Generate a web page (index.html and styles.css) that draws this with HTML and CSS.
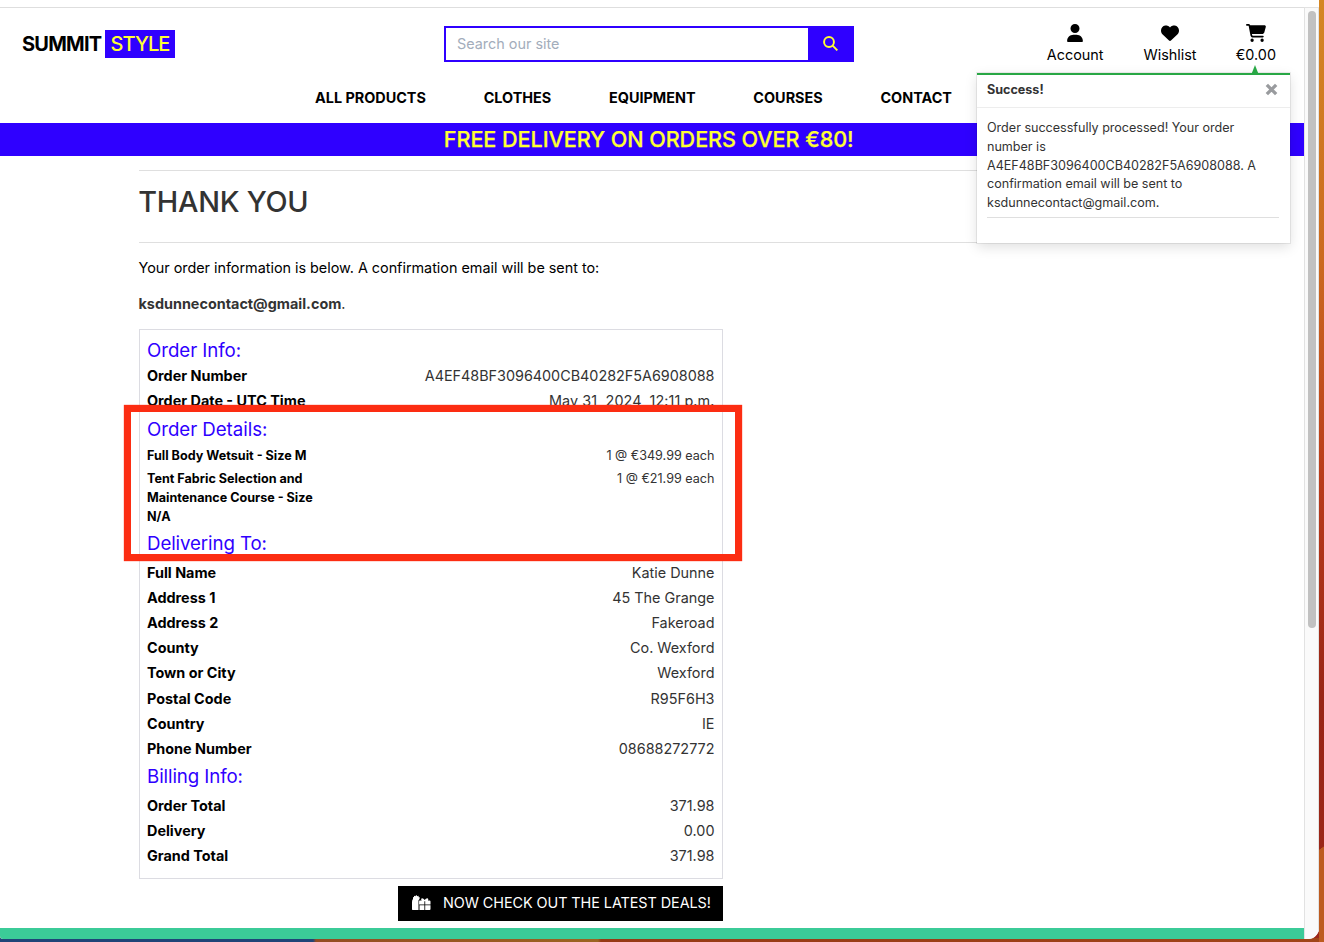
FILE: index.html
```html
<!DOCTYPE html>
<html lang="en">
<head>
<meta charset="utf-8">
<title>Summit Style</title>
<link rel="stylesheet" href="styles.css">
</head>
<body>
<div class="window">
  <div class="page">
    <header class="header">
      <div class="brand"><b>SUMMIT</b><span class="brand-tag">STYLE</span></div>
      <div class="search">
        <div class="search-field">Search our site</div>
        <div class="search-btn"><svg width="15" height="15" viewBox="0 0 14 14"><circle cx="5.6" cy="5.6" r="4.6"/><path d="M9 9 13.400 13.400"/></svg></div>
      </div>
      <div class="tools">
        <a class="tool account"><svg width="16" height="18" viewBox="0 0 448 512"><path d="M224 256A128 128 0 1 0 224 0a128 128 0 1 0 0 256zm-46 48C80 304 0 384 0 482c0 17 13 30 30 30h388c17 0 30-13 30-30 0-98-80-178-178-178z"/></svg><span>Account</span></a>
        <a class="tool wishlist"><svg width="18" height="18" viewBox="0 0 512 512"><path d="M47.600 300.400 228.300 469.100c7.500 7 17.400 10.900 27.700 10.900s20.200-3.900 27.700-10.900L464.400 300.400c30.400-28.300 47.600-68 47.600-109.500v-5.800c0-69.900-50.500-129.500-119.400-141C347 36.500 300.600 51.400 268 84L256 96 244 84c-32.600-32.600-79-47.500-124.600-39.900C50.500 55.600 0 115.200 0 185.100v5.800c0 41.500 17.200 81.200 47.600 109.500z"/></svg><span>Wishlist</span></a>
        <a class="tool cart"><svg width="20" height="18" viewBox="0 0 576 512"><path d="M0 24C0 10.700 10.700 0 24 0h45.500c22 0 41.500 12.800 50.600 32h411c26.300 0 45.500 25 38.600 50.400l-41 152.300c-8.500 31.400-37 53.300-69.500 53.300H170.700l5.400 28.500c2.200 11.300 12.100 19.500 23.600 19.500H488c13.300 0 24 10.700 24 24s-10.700 24-24 24H199.700c-34.600 0-64.300-24.600-70.700-58.500L77.400 54.500c-.7-3.800-4-6.500-7.900-6.500H24C10.700 48 0 37.300 0 24zm128 440a48 48 0 1 1 96 0 48 48 0 1 1-96 0zm288 0a48 48 0 1 1 96 0 48 48 0 1 1-96 0z"/></svg><span>€0.00</span></a>
      </div>
    </header>
    <nav class="nav"><a>ALL PRODUCTS</a><a>CLOTHES</a><a>EQUIPMENT</a><a>COURSES</a><a>CONTACT</a></nav>
    <div class="banner"><span>FREE DELIVERY ON ORDERS OVER €80!</span></div>
    <main class="content">
      <div class="title"><h1>THANK YOU</h1></div>
      <p class="intro"><span>Your order information is below. A confirmation email will be sent to:</span></p>
      <p class="email"><b>ksdunnecontact@gmail.com</b>.</p>
      <section class="order">
        <h2>Order Info:</h2>
        <div class="row"><b>Order Number</b><span class="number">A4EF48BF3096400CB40282F5A6908088</span></div>
        <div class="row"><b>Order Date - UTC Time</b><span class="date">May 31, 2024, 12:11 p.m.</span></div>
        <h2 class="details">Order Details:</h2>
        <div class="row small"><b>Full Body Wetsuit - Size M</b><span>1 @ €349.99 each</span></div>
        <div class="row small"><b>Tent Fabric Selection and<br>Maintenance Course - Size<br>N/A</b><span>1 @ €21.99 each</span></div>
        <h2 class="delivering">Delivering To:</h2>
        <div class="row"><b>Full Name</b><span>Katie Dunne</span></div>
        <div class="row"><b>Address 1</b><span>45 The Grange</span></div>
        <div class="row"><b>Address 2</b><span>Fakeroad</span></div>
        <div class="row"><b>County</b><span>Co. Wexford</span></div>
        <div class="row"><b>Town or City</b><span>Wexford</span></div>
        <div class="row"><b>Postal Code</b><span>R95F6H3</span></div>
        <div class="row"><b>Country</b><span>IE</span></div>
        <div class="row"><b>Phone Number</b><span>08688272772</span></div>
        <h2 class="billing">Billing Info:</h2>
        <div class="row"><b>Order Total</b><span>371.98</span></div>
        <div class="row"><b>Delivery</b><span>0.00</span></div>
        <div class="row"><b>Grand Total</b><span>371.98</span></div>
      </section>
      <a class="deals"><svg width="19" height="16" viewBox="0 0 19 16"><path d="M1 4V2l1 .3V.8l1.300.5L4.300 0l1 1.300L6.600.8v1.500l1-.3v2L6.500 5.200V15H.6Q0 15 0 14.300V7Q0 5 1 4z"/><path d="M7.500 5.500h2.200C8.200 3.500 10 2.500 11.500 3.700l1.200 1.300 1.200-1.300c1.500-1.200 3.300-.2 2 1.800h1.600q1 0 1 1V9.500h-5.300V6.200h-.8v3.300h-5.300V6.500q0-1 .4-1zM7.500 10.200h4.900V15H7.500zM13.200 10.200h5.300v3.900q0 .9-.9.900h-4.400z"/></svg><span>NOW CHECK OUT THE LATEST DEALS!</span></a>
    </main>
    <footer class="footer"></footer>
  </div>
  <div class="scrollbar"><div class="thumb"></div></div>
</div>
<div class="toast">
  <div class="toast-arrow"></div>
  <div class="toast-head"><b>Success!</b><svg width="13" height="13" viewBox="0 0 12 12"><path d="M1.700 1.700 10.300 10.300M10.300 1.700 1.700 10.300"/></svg></div>
  <div class="toast-body"><p>Order successfully processed! Your order<br>number is<br>A4EF48BF3096400CB40282F5A6908088. A<br>confirmation email will be sent to<br>ksdunnecontact@gmail.com.</p></div>
</div>
<div class="highlight"></div>
</body>
</html>
```

FILE: styles.css
```css
* { box-sizing: border-box; }
body {
  margin: 0;
  width: 1324px;
  height: 942px;
  overflow: hidden;
  font: 14.4px/21.6px Inter, sans-serif;
  color: #333;
  background:
    linear-gradient(90deg, #1f4478 0 313px, #944c22 316px, #9b6421 598px, #963914 601px, #a04418) 0 938px / 1319px 4px no-repeat,
    linear-gradient(145deg, transparent 0 49%, #bd5b20 52%) 1319px 838px / 5px 20px no-repeat,
    linear-gradient(#bd5b20, #bd5b20) 1319px 857px / 5px 85px no-repeat,
    linear-gradient(#d48724, #cb6a20 260px, #b93b1b 480px, #982516 700px, #9c2719);
}
h1, h2, p { margin: 0; font-weight: 400; }
svg { display: block; flex: none; }
.window {
  display: flex;
  width: 1319px;
  height: 939px;
  padding-top: 7px;
  background: #fff;
  border-radius: 0 0 11px 3px;
  overflow: hidden;
}
.page { width: 1304px; border-top: 1px solid #dedede; display: flex; flex-direction: column; }
.scrollbar { width: 15px; border: solid #e2e2e2; border-width: 1px 1px 0 1px; background: #fafafa; padding: 3px 0 0 3px; }
.thumb { width: 8px; height: 617px; border-radius: 4px; background: #c1c1c1; }

.header { display: flex; height: 72px; padding: 18px 28px 0 22px; color: #000; }
.brand { display: flex; align-items: center; width: 422px; height: 36px; font-size: 20px; }
.brand b { width: 83px; letter-spacing: -.75px; line-height: 28px; }
.brand-tag { width: 70px; height: 28px; line-height: 28px; text-align: center; letter-spacing: -.9px; font-weight: 500; background: #2f00ff; color: #ff3; }
.search { display: flex; width: 410px; height: 36px; border: 2px solid #2f00ff; }
.search-field { flex: 1; padding-left: 11px; line-height: 32px; color: #a3adbb; }
.search-btn { display: flex; width: 44px; padding: 8px 0 0 14.500px; background: #2f00ff; }
.search-btn svg { fill: none; stroke: #ff3; stroke-width: 1.8; }
.tools { flex: 1; display: flex; justify-content: flex-end; gap: 40px; margin-top: -2px; }
.tool { display: flex; flex-direction: column; align-items: center; }
.tool span { line-height: 22px; margin-top: 2px; }
.account, .wishlist { margin-right: -.8px; margin-left: .8px; }

.nav { display: flex; height: 43px; padding: 7px 0 0 315px; gap: 57.8px; font-weight: 700; color: #000; }
.banner { height: 33px; background: #2f00ff; color: #ff3; font-size: 21.6px; font-weight: 500; line-height: 33px; padding-left: 443.8px; letter-spacing: -.06px; -webkit-text-stroke: .25px #ff3; }
.content { display: flex; flex-direction: column; flex: 1; padding: 14px 0 0 139px; }
.title { width: 1026px; height: 73px; border: solid #dfdfdf; border-width: 1px 0; }
.title h1 { font-size: 28.8px; font-weight: 500; line-height: 62px; letter-spacing: -.25px; margin-left: -.7px; }
.intro { margin: 14px 0 0 -.5px; color: #000; letter-spacing: -.02px; }
.email { margin: 14.5px 0 0 -.5px; }
.order { width: 584px; height: 550px; margin-top: 14px; padding: 7px 7.500px 7px 7px; border: 1px solid #dcdce2; }
.order h2 { height: 26px; font-size: 18.7px; line-height: 27px; letter-spacing: -.05px; color: #2f00ff; }
.order h2.details { height: 33px; line-height: 33px; }
.order h2.delivering { height: 30px; line-height: 28px; letter-spacing: -.1px; }
.order h2.billing { height: 32px; line-height: 32px; letter-spacing: -.1px; }
.row { display: flex; justify-content: space-between; height: 25.13px; line-height: 25px; }
.row b, .email b { font-weight: 700; }
.row b { color: #000; }
.row .number { letter-spacing: -.02px; }
.row .date { letter-spacing: .08px; }
.row.small { height: auto; font-size: 12.6px; line-height: 19px; padding-bottom: 4px; }
.deals { display: flex; align-items: center; width: 325px; height: 35px; margin: 7px 0 0 259px; padding-left: 14px; gap: 12px; background: #000; color: #fff; letter-spacing: -.06px; }
.deals svg { fill: #fff; }
.footer { height: 11px; background: #3bcb98; }

/* Notification anchored under the cart */
.toast { position: absolute; left: 977px; top: 73px; width: 313px; height: 170px; background: #fff; border-top: 2px solid #28a745; font-size: 12.6px; line-height: 18.8px; letter-spacing: -.02px; box-shadow: 0 0 0 1px rgba(0,0,0,.07), 0 4px 12px rgba(0,0,0,.13); }
.toast-arrow { position: absolute; left: 274.5px; top: -10px; width: 7px; height: 9px; background: #28a745; clip-path: polygon(50% 0, 100% 100%, 0 100%); }
.toast-head { display: flex; align-items: center; justify-content: space-between; height: 33px; padding: 0 12.5px 2px 10px; border-bottom: 1px solid #ededed; }
.toast-head svg { margin-top: -1px; fill: none; stroke: #999b9e; stroke-width: 3.1; }
.toast-body { padding: 11px 11px 0 10px; }
.toast-body p { padding-bottom: 4px; border-bottom: 1px solid #dfdfdf; }
/* Annotation frame over the order lines */
.highlight { position: absolute; left: 124px; top: 405px; width: 618px; height: 156px; border: 7px solid #fc2d12; box-shadow: 0 0 1px #fc2d12; }
```
